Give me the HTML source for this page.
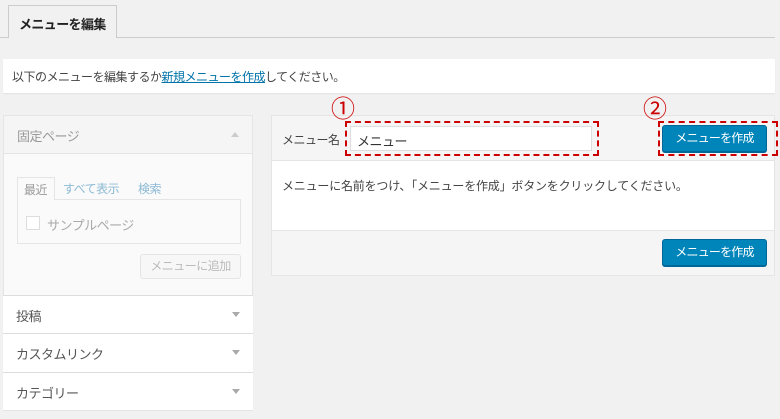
<!DOCTYPE html>
<html><head><meta charset="utf-8"><style>
*{margin:0;padding:0;box-sizing:border-box}
body{width:780px;height:419px;background:#f1f1f1;font-family:"Liberation Sans","Noto Sans CJK JP",sans-serif;font-size:12px;letter-spacing:-0.5px;color:#444;position:relative;overflow:hidden;white-space:nowrap}
.a{position:absolute}
.btn{position:absolute;background:#0085ba;border:1px solid #006799;border-radius:3px;color:#fff;font-size:12px;letter-spacing:-0.8px;text-align:center;line-height:25px;box-shadow:0 1px 0 #006799}
.sec{position:absolute;left:3px;width:250px;height:39px;background:#fff;border-top:1px solid #ddd;color:#555;font-size:13px;padding:10px 13px}
.arr{position:absolute;right:13px;top:16px;width:0;height:0;border-left:4px solid transparent;border-right:4px solid transparent;border-top:5px solid #aaa}
</style></head><body>
<div class="a" style="left:0;top:37px;width:775px;border-top:1px solid #ccc"></div>
<div class="a" style="left:8px;top:5px;width:109px;height:33px;background:#f1f1f1;border:1px solid #ccc;border-bottom:none;font-weight:bold;font-size:13px;letter-spacing:-0.6px;color:#222;padding:8px 10px">メニューを編集</div>
<div class="a" style="left:3px;top:59px;width:772px;height:34px;background:#fff;box-shadow:0 1px 1px rgba(0,0,0,.06);padding:9px 9px;color:#444;letter-spacing:-0.5px">以下のメニューを編集するか<span style="color:#0073aa;text-decoration:underline">新規メニューを作成</span>してください。</div>

<div class="a" style="left:3px;top:115px;width:250px;height:295px;background:#fafafa;border:1px solid #e5e5e5;box-shadow:0 1px 1px rgba(0,0,0,.04)"></div>
<div class="a" style="left:3px;top:115px;width:250px;height:39px;background:#f5f5f5;border:1px solid #e5e5e5;color:#999;font-size:13px;padding:10px 13px">固定ページ<div class="arr" style="border-top:none;border-bottom:5px solid #ccc"></div></div>
<div class="a" style="left:17px;top:177px;width:38px;height:23px;border:1px solid #e5e5e5;border-bottom:none;background:#fafafa;color:#999;padding:3px 6px;z-index:2">最近</div>
<div class="a" style="left:63px;top:180px;color:#8cb9d4">すべて表示</div>
<div class="a" style="left:138px;top:180px;color:#8cb9d4">検索</div>
<div class="a" style="left:17px;top:199px;width:224px;height:45px;border:1px solid #e5e5e5"></div>
<div class="a" style="left:26px;top:216px;width:14px;height:14px;border:1px solid #ddd;background:#fff"></div>
<div class="a" style="left:47px;top:215px;color:#aaa;font-size:13px">サンプルページ</div>
<div class="a" style="left:140px;top:254px;width:101px;height:25px;border:1px solid #e5e5e5;border-radius:3px;background:#f7f7f7;color:#bbb;text-align:center;line-height:23px">メニューに追加</div>
<div class="sec" style="top:295px">投稿<div class="arr"></div></div>
<div class="sec" style="top:333px">カスタムリンク<div class="arr"></div></div>
<div class="sec" style="top:372px;border-bottom:1px solid #e5e5e5">カテゴリー<div class="arr"></div></div>

<div class="a" style="left:271px;top:115px;width:504px;height:161px;background:#fff;border:1px solid #e5e5e5"></div>
<div class="a" style="left:271px;top:115px;width:504px;height:46px;background:#f5f5f5;border:1px solid #e5e5e5"></div>
<div class="a" style="left:282px;top:131px">メニュー名</div>
<div class="a" style="left:350px;top:126px;width:242px;height:25px;border:1px solid #ddd;background:#fff;padding:4px 6px;color:#333;font-size:13px">メニュー</div>
<div class="a" style="left:345px;top:121px;width:254px;height:35px;border:2px dashed #c00"></div>
<div class="btn" style="left:662px;top:125px;width:105px;height:27px">メニューを作成</div>
<div class="a" style="left:658px;top:121px;width:120px;height:35px;border:2px dashed #c00"></div>
<div class="a" style="left:331px;top:89px;color:#c00;font-size:24px;letter-spacing:0">①</div>
<div class="a" style="left:643px;top:89px;color:#c00;font-size:24px;letter-spacing:0">②</div>
<div class="a" style="left:282px;top:177px;letter-spacing:-0.2px">メニューに名前をつけ、「メニューを作成」ボタンをクリックしてください。</div>
<div class="a" style="left:271px;top:230px;width:504px;height:46px;background:#f5f5f5;border:1px solid #e5e5e5"></div>
<div class="btn" style="left:662px;top:239px;width:105px;height:27px">メニューを作成</div>
</body></html>
